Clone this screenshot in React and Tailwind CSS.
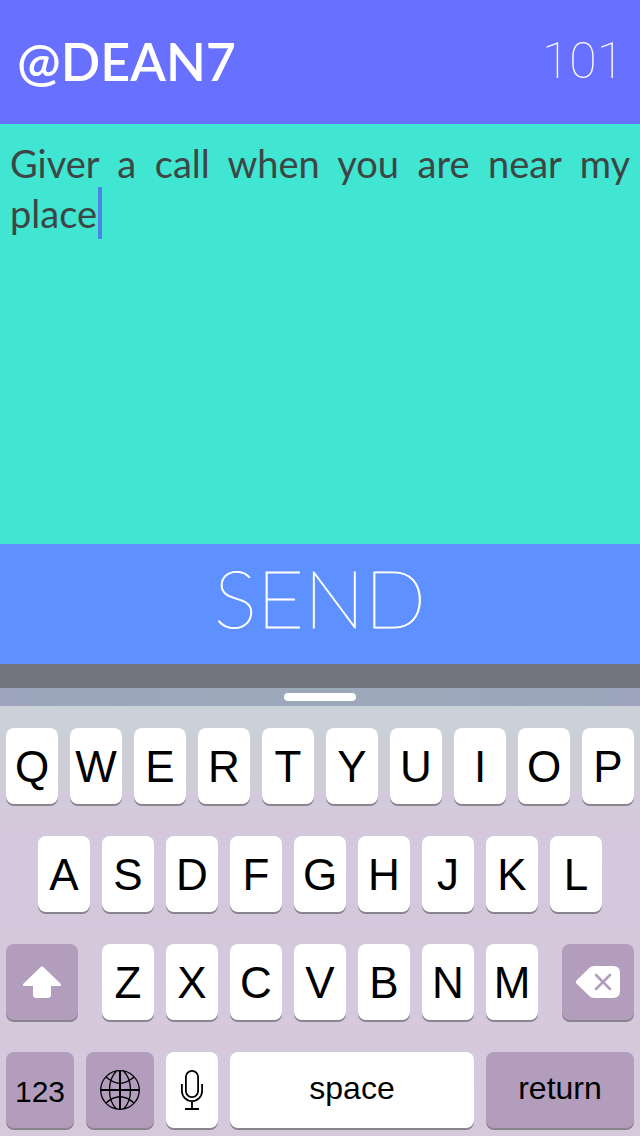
import React, { useState } from "react";

function Key({ label, tone = "light", className = "flex-[52_1_0%]", children }) {
  return (
    <button
      type="button"
      aria-label={label}
      className={
        "flex h-[76px] min-w-0 items-center justify-center rounded-lg text-black shadow-[0_2px_0_#88848c] " +
        (tone === "dark" ? "bg-[#b29dbd] " : "bg-white ") +
        className
      }
    >
      {children}
    </button>
  );
}

function LetterKeys({ letters }) {
  return letters.split("").map((letter) => (
    <Key key={letter} label={letter}>
      <span className="pt-[2px] text-[44px] leading-[72px]">{letter}</span>
    </Key>
  ));
}

function ShiftIcon() {
  return (
    <svg width="38" height="32" viewBox="0 0 38 32" fill="white" aria-hidden="true">
      <path d="M17.7 .9 Q19 -.4 20.3 .9 L37.4 17.6 Q39 20 36.6 20 H28 V28.5 Q28 32 24.5 32 H13.5 Q10 32 10 28.5 V20 H1.4 Q-1 20 .6 17.6 Z" />
    </svg>
  );
}

function DeleteIcon() {
  return (
    <svg width="44" height="32" viewBox="0 0 44 32" fill="none" aria-hidden="true">
      <path
        fill="white"
        d="M.7 14.3 L13 2.2 Q15.2 0 18.4 0 H37 Q44 0 44 7 V25 Q44 32 37 32 H18.4 Q15.2 32 13 29.8 L.7 17.7 Q-.8 16 .7 14.3 Z"
      />
      <path stroke="#b29dbd" strokeWidth="2.6" strokeLinecap="round" d="M20 9 L34 23 M34 9 L20 23" />
    </svg>
  );
}

function GlobeIcon() {
  return (
    <svg width="40" height="40" viewBox="0 0 40 40" fill="none" stroke="black" strokeWidth="1.3" aria-hidden="true">
      <circle cx="20" cy="20" r="19.3" />
      <path strokeWidth="2" d="M20 1 V39 M1 20 H39" />
      <path d="M16.5 1 C7.2 10 7.2 30 16.5 39 M23.5 1 C32.8 10 32.8 30 23.5 39" />
      <path d="M6 7 Q20 19.5 34 7 M6 33 Q20 20.5 34 33" />
    </svg>
  );
}

function MicIcon() {
  return (
    <svg width="22" height="40" viewBox="0 0 22 40" fill="none" stroke="black" strokeWidth="1.8" aria-hidden="true">
      <rect x="4.9" y="0.9" width="12.2" height="26.2" rx="6.1" />
      <path d="M.9 14 V21 A10.1 10.1 0 0 0 21.1 21 V14 M11 31 V39 M4 39 H18" />
    </svg>
  );
}

export default function App() {
  const [message, setMessage] = useState("Giver a call when you are near my place");

  return (
    <main className="flex min-h-screen flex-col font-['Lato',sans-serif]">
      <header className="flex h-[124px] items-center justify-between bg-[#6870ff] pr-[16px] pb-[2px] pl-[17px] text-white">
        <h1 className="text-[52px] leading-[64px] font-semibold">@DEAN7</h1>
        <output
          aria-label="Characters left"
          className="font-['Roboto',sans-serif] text-[50px] leading-[64px] font-thin"
        >
          101
        </output>
      </header>

      <section className="relative flex min-h-[420px] grow bg-[#40e6d1]">
        <textarea
          aria-label="Message"
          value={message}
          onChange={(event) => setMessage(event.target.value)}
          className="w-full resize-none bg-transparent px-[10px] pt-[14px] text-justify text-[38px] leading-[50px] text-[#3d4545] outline-none"
        />
        <span aria-hidden="true" className="absolute top-[63px] left-[98px] h-[52px] w-1 bg-[#4a86e8]" />
      </section>

      <button
        type="button"
        className="h-[120px] bg-[#5e91ff] pb-[14px] text-[81px] leading-[104px] font-thin text-white [-webkit-text-stroke:1px_white]"
      >
        SEND
      </button>

      <div className="h-6 bg-[#71747f]" />
      <div className="flex h-[18px] items-center justify-center bg-[linear-gradient(90deg,#9ca5bd,#9da9ba_45%,#9da9ba_55%,#9ca5bd)]">
        <div className="h-2 w-[72px] rounded-full bg-white" />
      </div>

      <section
        aria-label="Keyboard"
        className="flex flex-col gap-8 bg-[linear-gradient(180deg,#cbd1d9_0px,#cbd0d9_24px,#d1cbda_80px,#d6c8dc_130px,#d6c9dc_100%)] px-[6px] pt-[22px] pb-2 font-['Liberation_Sans',Arial,sans-serif]"
      >
        <div className="flex gap-3">
          <LetterKeys letters="QWERTYUIOP" />
        </div>
        <div className="flex gap-3 px-8">
          <LetterKeys letters="ASDFGHJKL" />
        </div>
        <div className="flex gap-6">
          <Key label="Shift" tone="dark" className="flex-[72_1_0%]">
            <ShiftIcon />
          </Key>
          <div className="flex flex-[436_1_0%] gap-3">
            <LetterKeys letters="ZXCVBNM" />
          </div>
          <Key label="Delete" tone="dark" className="flex-[72_1_0%]">
            <DeleteIcon />
          </Key>
        </div>
        <div className="flex gap-3 text-[32px]">
          <Key label="123" tone="dark" className="flex-[68_1_0%] pt-[2px]">
            <span className="text-[30px]">123</span>
          </Key>
          <Key label="Next keyboard" tone="dark" className="flex-[68_1_0%]">
            <GlobeIcon />
          </Key>
          <Key label="Dictate">
            <MicIcon />
          </Key>
          <Key label="space" className="flex-[244_1_0%] pb-1">
            space
          </Key>
          <Key label="return" tone="dark" className="flex-[148_1_0%] pb-1">
            return
          </Key>
        </div>
      </section>
    </main>
  );
}
